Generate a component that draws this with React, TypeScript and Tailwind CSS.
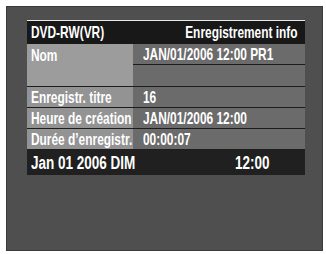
const FONT = "font-['Liberation_Sans','Arial',sans-serif]"

const ROWS = [
  { label: 'Enregistr. titre', value: '16' },
  { label: 'Heure de création', value: 'JAN/01/2006 12:00' },
  { label: 'Durée d’enregistr.', value: '00:00:07' },
]

// the OSD font is a condensed grotesque; squeeze Liberation Sans to match
function T({ children, right, big }: { children: React.ReactNode; right?: boolean; big?: boolean }) {
  return (
    <span
      className={`inline-block whitespace-nowrap ${big ? 'scale-x-[0.75]' : 'scale-x-[0.7]'} ${
        right ? 'origin-right' : 'origin-left'
      }`}
    >
      {children}
    </span>
  )
}

export default function App() {
  return (
    <div className={`w-[326px] h-[254px] bg-white pt-[6px] pl-[6px] ${FONT} font-bold text-white`}>
      <div className="w-[317px] h-[245px] bg-[#4f4f4f] border border-[#3a3a3a] pl-[20px] pt-[13px]">
        <div className="w-[278px] border-t border-[#e8e8e8]">
          {/* header */}
          <div className="h-[23px] bg-[#181818] flex items-center justify-between pl-[4px] pr-[7px] text-[17px] leading-none">
            <T>DVD-RW(VR)</T>
            <T right>Enregistrement info</T>
          </div>

          {/* Nom spans two value rows */}
          <div className="flex">
            <div className="w-[106px] shrink-0 bg-[#9c9c9c] pl-[4px] pt-[3px] text-[17px] leading-none">
              <T>Nom</T>
            </div>
            <div className="flex-1 min-w-0 bg-[#6b6b6b]">
              <div className="h-[21px] flex items-center pl-[10px] text-[17px] leading-none border-b border-[#1c1c1c]">
                <T>JAN/01/2006 12:00 PR1</T>
              </div>
              <div className="h-[21px]"></div>
            </div>
          </div>

          {ROWS.map((r) => (
            <div key={r.label} className="flex h-[21px] border-t border-[#1c1c1c] text-[17px] leading-none">
              <div className="w-[106px] shrink-0 bg-[#939393] pl-[4px] flex items-center">
                <T>{r.label}</T>
              </div>
              <div className="flex-1 min-w-0 bg-[#6b6b6b] pl-[10px] flex items-center">
                <T>{r.value}</T>
              </div>
            </div>
          ))}

          {/* footer clock */}
          <div className="h-[26px] bg-[#202020] border-t border-[#1c1c1c] flex items-center pl-[4px] text-[18px] leading-none">
            <span className="w-[204px] shrink-0">
              <T big>Jan 01 2006 DIM</T>
            </span>
            <T big>12:00</T>
          </div>
        </div>
      </div>
    </div>
  )
}
